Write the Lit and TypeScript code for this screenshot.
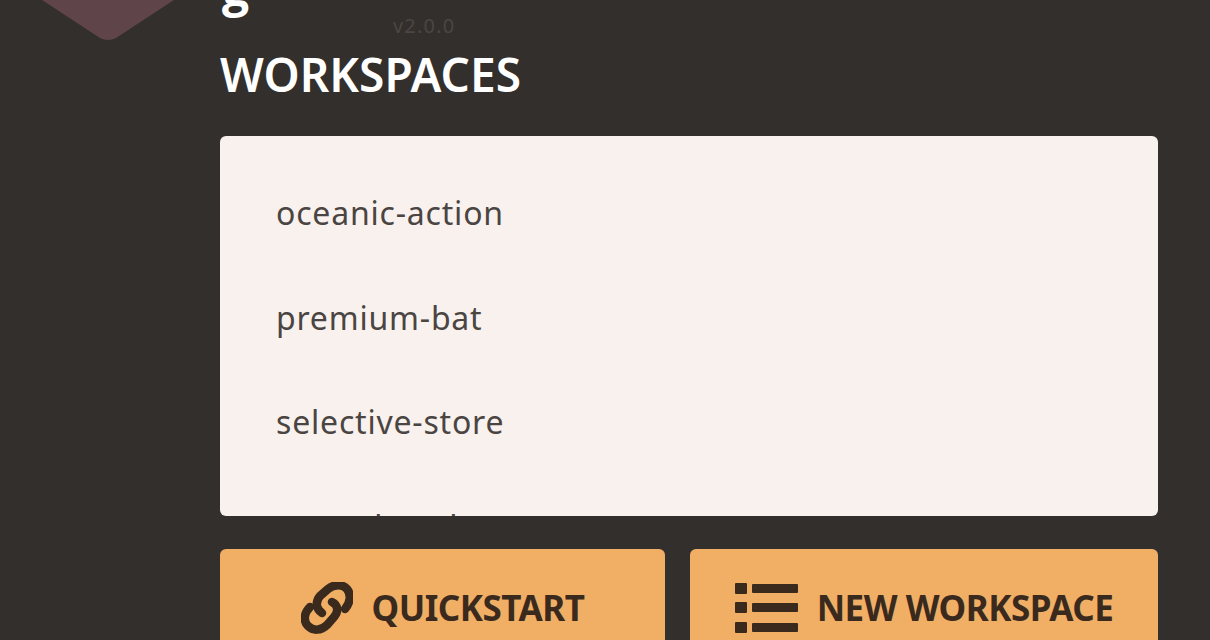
import { LitElement, html, css } from "lit";
import { customElement } from "lit/decorators.js";

@customElement("app-root")
export class AppRoot extends LitElement {
  static styles = css`
    :host { display: block; width: 1210px; height: 640px; overflow: hidden; background: #332f2c; font-family: "Noto Sans", "Open Sans", sans-serif; }
    .page { display: grid; grid-template-columns: 220px 938px; height: 640px; }
    .logo { position: relative; }
    .logo svg { position: absolute; left: 36px; top: -40px; }
    .main { display: flex; flex-direction: column; min-width: 0; }
    .brand { height: 48px; position: relative; }
    .title { position: absolute; left: 2px; bottom: 36px; font-family: "Open Sans", sans-serif; font-size: 48px; line-height: 48px; font-weight: 700; color: #fff; }
    .version { position: absolute; left: 173px; top: 14px; font-size: 20px; line-height: 24px; letter-spacing: 1.2px; color: #4a4643; }
    h1 { margin: 0; font-size: 46px; line-height: 52px; font-weight: 600; color: #fff; letter-spacing: 0.05px; }
    .list { margin-top: 36px; height: 380px; box-sizing: border-box; background: #f9f1ed; border-radius: 6px; overflow: hidden; padding: 51px 56px 0; }
    .row { height: 104.5px; font-size: 32px; line-height: 52px; letter-spacing: 0.8px; color: #4a4542; }
    .actions { display: grid; grid-template-columns: 445px 468px; column-gap: 25px; margin-top: 33px; }
    .btn { height: 120px; box-sizing: border-box; background: #f1ae65; border-radius: 6px; display: flex; justify-content: center; gap: 19px; padding-top: 33px; color: #3a2a1d; font-size: 35px; line-height: 52px; font-weight: 700; letter-spacing: -0.5px; }
    .btn svg { flex: none; }
  `;
  render() {
    return html`<div class="page">
      <div class="logo">
        <svg width="144" height="80" viewBox="0 0 144 80"><path d="M0 36 L64 78 Q72 82 80 78 L144 36 L144 0 L0 0 Z" fill="#5f454a"/></svg>
      </div>
      <div class="main">
        <div class="brand"><span class="title">g</span><span class="version">v2.0.0</span></div>
        <h1>WORKSPACES</h1>
        <div class="list">
          <div class="row">oceanic-action</div>
          <div class="row">premium-bat</div>
          <div class="row">selective-store</div>
          <div class="row">curved-coal</div>
        </div>
        <div class="actions">
          <div class="btn">
            <svg width="52" height="52" viewBox="0 0 52 52" fill="none" stroke="#3a2a1d" stroke-width="8.5" stroke-linecap="round"><path d="M21 31 C15 27 14 20 19 14 L27 7 C33 2 42 2 46 7 C50 12 50 20 44 27"/><path d="M9 25 C3 31 2 39 7 44 C12 49 20 49 26 43 L33 35 C38 29 37 23 31 20"/></svg>
            <span>QUICKSTART</span>
          </div>
          <div class="btn">
            <svg width="63" height="52" viewBox="0 0 63 52" fill="#3a2a1d"><rect x="0" y="1" width="12" height="11" rx="1"/><rect x="0" y="20" width="12" height="11" rx="1"/><rect x="0" y="40" width="12" height="11" rx="1"/><rect x="17" y="2" width="46" height="9" rx="1"/><rect x="17" y="21" width="46" height="9" rx="1"/><rect x="17" y="41" width="46" height="9" rx="1"/></svg>
            <span>NEW WORKSPACE</span>
          </div>
        </div>
      </div>
    </div>`;
  }
}
